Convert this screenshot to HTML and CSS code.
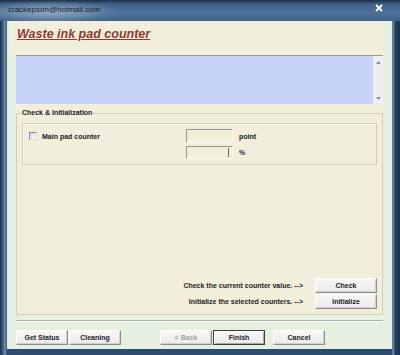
FILE: index.html
```html
<!DOCTYPE html>
<html>
<head>
  <meta charset="UTF-8">
  <title>Waste ink pad counter</title>
  <link rel="stylesheet" href="styles.css">
</head>
<body>
  <div class="window">
    <div class="titlebar">
      <span class="caption">crackepson@hotmail.com</span>
      <svg class="close" width="8" height="8" viewBox="0 0 8 8">
        <path d="M1 1 L7 7 M7 1 L1 7" stroke="#fff" stroke-width="1.8" fill="none"/>
      </svg>
    </div>
    <div class="frame">
      <div class="client">
        <div class="header">
          <h1 class="title">Waste ink pad counter</h1>
        </div>
        <div class="body">
          <div class="log">
            <div class="log-text"></div>
            <div class="scrollbar">
              <svg width="7" height="5" viewBox="0 0 7 5"><path d="M3.5 1 L6 4 L1 4 Z" fill="#8d9099"/></svg>
              <svg width="7" height="5" viewBox="0 0 7 5"><path d="M1 1 L6 1 L3.5 4 Z" fill="#8d9099"/></svg>
            </div>
          </div>

          <fieldset class="group">
            <legend>Check &amp; Initialization</legend>
            <div class="counters">
              <label class="check-label"><span class="checkbox"></span>Main pad counter</label>
              <span class="field"></span>
              <span class="unit">point</span>
              <span></span>
              <span class="field"><span class="caret"></span></span>
              <span class="unit">%</span>
            </div>
            <div class="actions">
              <div class="action-row">
                <span class="action-label">Check the current counter value. --&gt;</span>
                <button class="btn action-btn">Check</button>
              </div>
              <div class="action-row">
                <span class="action-label">Initialize the selected counters. --&gt;</span>
                <button class="btn action-btn">Initialize</button>
              </div>
            </div>
          </fieldset>
        </div>

        <div class="separator"></div>

        <div class="footer">
          <button class="btn">Get Status</button>
          <button class="btn">Cleaning</button>
          <button class="btn btn-disabled back">&lt; Back</button>
          <button class="btn btn-default">Finish</button>
          <button class="btn cancel">Cancel</button>
        </div>
      </div>
    </div>
  </div>
</body>
</html>
```

FILE: styles.css
```css
body {
  margin: 0;
  width: 400px;
  height: 355px;
  overflow: hidden;
  background-color: #1f3856;
  font-family: "Liberation Sans", Arial, sans-serif;
}

.window {
  width: 400px;
  height: 355px;
  display: flex;
  flex-direction: column;
  background: linear-gradient(90deg, #1d3049 0, #3b5d82 3px, #7594b4 5px, #2e4c70 7px, #2a4a6e 392px, #8aa0b6 393px, #23405f 395px, #1c3552 400px);
}

.titlebar {
  height: 21px;
  display: flex;
  align-items: center;
  justify-content: space-between;
  padding: 0 17px 3px 8px;
  box-sizing: border-box;
  background:
    radial-gradient(ellipse 70px 12px at 50px 12px, rgba(170,190,212,0.75), rgba(170,190,212,0) 100%),
    linear-gradient(180deg, #1b2f48 0, #3d5f86 4px, #4d7199 12px, #3e6289 21px);
}

.caption {
  font-size: 8px;
  color: #1c2330;
}

.close {
  display: block;
  margin-top: -2px;
}

.frame {
  flex: 1;
  display: flex;
}

.client {
  margin-left: 7px;
  width: 385px;
  height: 328px;
  background-color: #e5f0e1;
  display: flex;
  flex-direction: column;
}

.header {
  margin-left: 3px;
  width: 374px;
  height: 32px;
  background-color: #f2eedc;
  padding: 6px 0 0 7px;
  box-sizing: border-box;
}

.title {
  margin: 0;
  font-size: 12.5px;
  line-height: 14px;
  font-weight: bold;
  font-style: italic;
  color: #8a3b34;
  text-decoration: underline;
}

.body {
  margin-left: 9px;
  width: 368px;
  height: 262px;
  background-color: #f2eedc;
}

.log {
  margin-top: 2px;
  width: 367px;
  height: 49px;
  display: flex;
  background-color: #c7d3f9;
  border-top: 1px solid #9d9a8e;
  box-sizing: border-box;
}

.log-text {
  flex: 1;
}

.scrollbar {
  width: 10px;
  background-color: #eceff4;
  display: flex;
  flex-direction: column;
  justify-content: space-between;
  align-items: center;
  padding: 4px 0 3px;
}

.group {
  margin: 4px 0 0;
  padding: 0 5px 4px;
  width: 367px;
  height: 207px;
  box-sizing: border-box;
  border: 1px solid #d2cdbc;
  min-width: 0;
}

.group legend {
  padding: 0 1px;
  margin-left: -1px;
  font-size: 7px;
  line-height: 10px;
  font-weight: bold;
  color: #222;
}

.counters {
  margin-top: 5px;
  height: 42px;
  box-sizing: border-box;
  border: 1px solid #d2cdbc;
  box-shadow: inset 1px 1px 0 #fbf9f1;
  padding: 5px 0 0 6px;
  display: grid;
  grid-template-columns: 157px 47px auto;
  grid-template-rows: 14px 13px;
  row-gap: 3px;
  align-items: center;
}

.check-label {
  display: flex;
  align-items: center;
  font-size: 7px;
  font-weight: bold;
  color: #222;
}

.checkbox {
  width: 8px;
  height: 8px;
  box-sizing: border-box;
  margin-right: 5px;
  border-top: 1px solid #8c8c8c;
  border-left: 1px solid #8c8c8c;
  border-right: 1px solid #dcdcdc;
  border-bottom: 1px solid #dcdcdc;
  background: linear-gradient(135deg, #d8d8d8, #ffffff);
}

.field {
  height: 100%;
  box-sizing: border-box;
  border-top: 1px solid #9b978a;
  border-left: 1px solid #9b978a;
  border-right: 1px solid #fbfaf4;
  border-bottom: 1px solid #fbfaf4;
  display: flex;
  justify-content: flex-end;
  align-items: center;
  padding-right: 3px;
}

.caret {
  width: 1px;
  height: 9px;
  background-color: #6d6a62;
}

.unit {
  margin-left: 6px;
  font-size: 7px;
  font-weight: bold;
  color: #222;
}

.actions {
  margin-top: 113px;
  display: flex;
  flex-direction: column;
  gap: 1px;
}

.action-row {
  display: flex;
  justify-content: flex-end;
  align-items: center;
  gap: 12px;
}

.action-label {
  font-size: 7px;
  font-weight: bold;
  color: #222;
}

.btn {
  width: 52px;
  height: 15px;
  padding: 0;
  font-family: "Liberation Sans", Arial, sans-serif;
  font-size: 7px;
  font-weight: bold;
  color: #222;
  background: linear-gradient(180deg, #f7f7f7, #ebebeb);
  border-top: 1px solid #ffffff;
  border-left: 1px solid #ffffff;
  border-right: 1px solid #8e8e8e;
  border-bottom: 1px solid #8e8e8e;
  box-shadow: inset -1px -1px 0 #cfcfcf;
}

.action-btn {
  width: 62px;
}

.separator {
  margin: 5px 0 0 9px;
  width: 367px;
  height: 1px;
  background-color: #a9b2aa;
  border-bottom: 1px solid #f8fbf6;
}

.footer {
  margin-top: 8px;
  padding-left: 9px;
  display: flex;
  gap: 1px;
}

.back {
  margin-left: 38px;
}

.btn-disabled {
  color: #a3a3a3;
}

.btn-default {
  border: 1px solid #3c3c3c;
  box-shadow: inset 1px 1px 0 #fff, inset -1px -1px 0 #a8a8a8;
}

.cancel {
  margin-left: 7px;
}
```
